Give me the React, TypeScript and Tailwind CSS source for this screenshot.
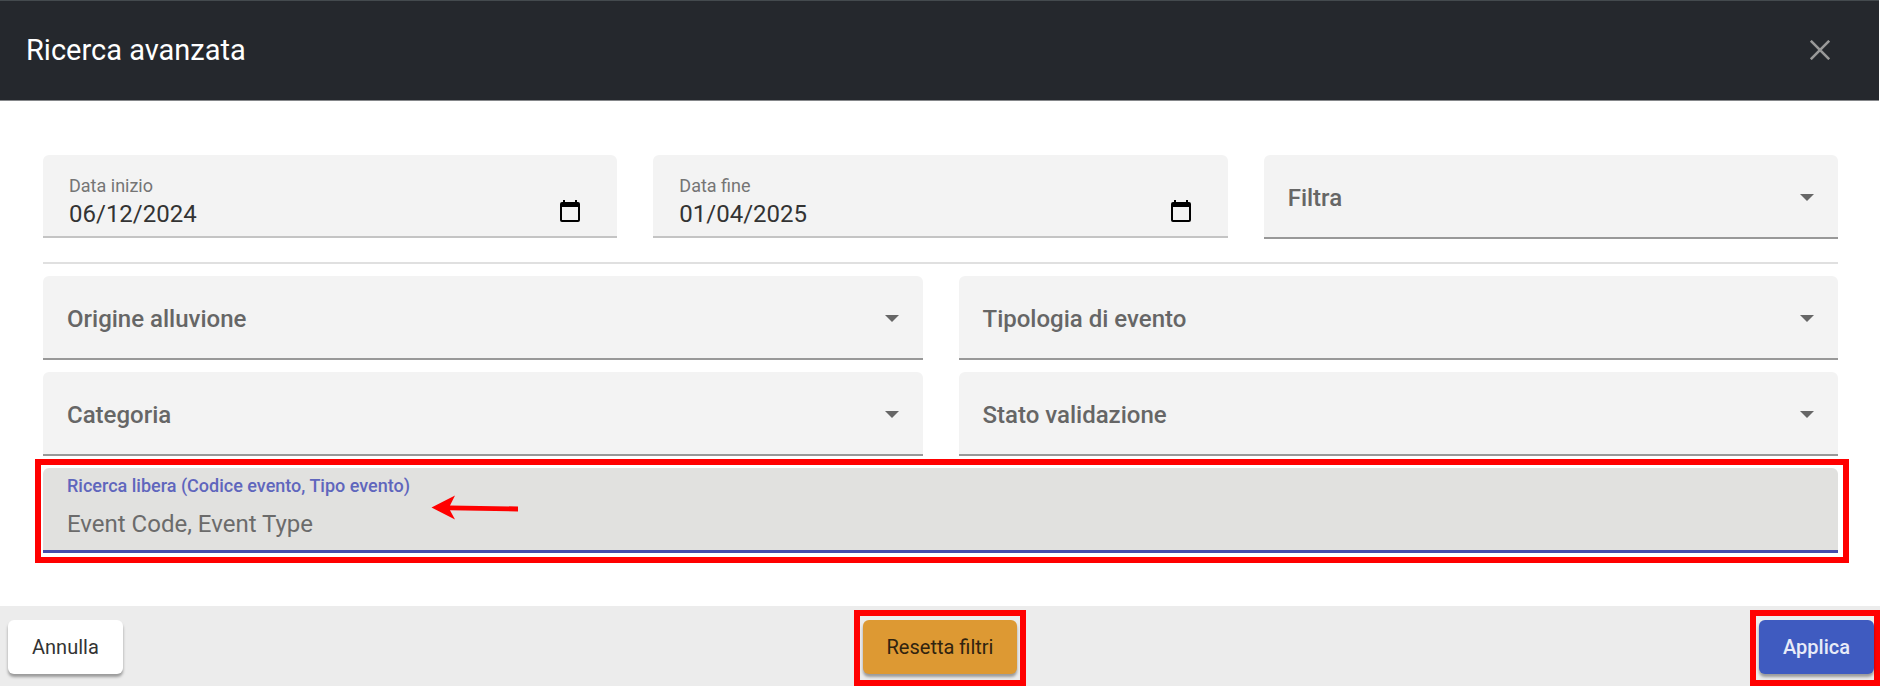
import { useState } from "react";
import type { ReactNode } from "react";

function SelectField({ id, label }: { id: string; label: string }) {
  return (
    <div className="grid h-21 items-center rounded-t-md border-b-2 border-[#989898] bg-[#f3f3f3]">
      <label
        htmlFor={id}
        className="pointer-events-none z-10 col-start-1 row-start-1 pt-1 pl-6 text-[24px] leading-8 font-medium text-[#666666]"
      >
        {label}
      </label>
      <svg
        viewBox="0 0 14 7"
        className="pointer-events-none z-10 col-start-1 row-start-1 mt-0.5 mr-6 h-[7px] w-3.5 justify-self-end fill-[#666666]"
        aria-hidden="true"
      >
        <path d="M0 0h14L7 7z" />
      </svg>
      <select
        id={id}
        className="col-start-1 row-start-1 h-full w-full appearance-none bg-transparent px-6 text-[24px] outline-none"
      >
        <option value=""></option>
      </select>
    </div>
  );
}

function DateField({ id, label, initial }: { id: string; label: string; initial: string }) {
  const [value, setValue] = useState(initial);
  return (
    <div className="flex h-[83px] items-end justify-between rounded-t-md border-b-2 border-[#c4c4c4] bg-[#f3f3f3] pr-[37px] pb-1.5 pl-[26px]">
      <div className="flex min-w-0 flex-1 flex-col">
        <label htmlFor={id} className="text-[18px] leading-6 text-[#757575]">
          {label}
        </label>
        <input
          id={id}
          type="text"
          inputMode="numeric"
          value={value}
          onChange={(e) => setValue(e.target.value)}
          className="w-full bg-transparent text-[24px] leading-8 text-[#333333] outline-none"
        />
      </div>
      <button type="button" aria-label={label} className="mb-2">
        <svg viewBox="0 0 20 22" className="h-[22px] w-5" aria-hidden="true">
          <path
            fillRule="evenodd"
            d="M3 0h2v2h10V0h2v2h1a2 2 0 0 1 2 2v16a2 2 0 0 1-2 2H2a2 2 0 0 1-2-2V4a2 2 0 0 1 2-2h1zM2 7v13h16V7z"
          />
        </svg>
      </button>
    </div>
  );
}

function Highlight({ className, children }: { className: string; children: ReactNode }) {
  return <div className={`border-6 border-[#ff0000] ${className}`}>{children}</div>;
}

const buttonBase =
  "block h-[54px] rounded-md px-6 text-[20px] leading-8 shadow-[0_3px_3px_rgba(0,0,0,0.35)]";

export default function App() {
  return (
    <main className="flex min-h-screen flex-col bg-white font-['Roboto',sans-serif]">
      <header className="mr-px flex h-[101px] items-center justify-between border-t border-b border-t-[#444a4e] border-b-[#85878a] bg-[#25282d] pr-[49px] pb-0.5 pl-[26px]">
        <h1 className="text-[29px] leading-10 text-white">Ricerca avanzata</h1>
        <button type="button" aria-label="Chiudi">
          <svg viewBox="0 0 20 20" className="size-5 stroke-[#999999]" strokeWidth="2.6" aria-hidden="true">
            <path d="M0.8 0.8 19.2 19.2M19.2 0.8 0.8 19.2" />
          </svg>
        </button>
      </header>

      <form className="flex-1 pt-[54px]">
        <div className="pr-[42px] pl-[43px]">
          <div className="grid grid-cols-3 gap-9">
            <DateField id="start" label="Data inizio" initial="06/12/2024" />
            <DateField id="end" label="Data fine" initial="01/04/2025" />
            <SelectField id="filter" label="Filtra" />
          </div>
          <hr className="mt-[23px] border-t-2 border-[#e0e0e0]" />
          <div className="mt-3 grid grid-cols-2 gap-x-9 gap-y-3">
            <SelectField id="origin" label="Origine alluvione" />
            <SelectField id="type" label="Tipologia di evento" />
            <SelectField id="category" label="Categoria" />
            <SelectField id="status" label="Stato validazione" />
          </div>
        </div>

        <div className="mt-[3px] mr-[31px] ml-[35px]">
          <Highlight className="pt-[3px] pr-[5px] pb-1 pl-0.5">
            <div className="relative flex h-[85px] flex-col rounded-t-md border-b-3 border-[#454cab] bg-[#e1e1df] px-6 pt-1.5">
              <label htmlFor="search" className="text-[18px] leading-6 font-medium text-[#5f66bd]">
                Ricerca libera (Codice evento, Tipo evento)
              </label>
              <input
                id="search"
                type="text"
                placeholder="Event Code, Event Type"
                className="mt-2.5 w-full bg-transparent text-[24px] leading-8 outline-none placeholder:text-[#6b6b6b]"
              />
              <svg viewBox="0 0 88 30" className="absolute top-6 left-[388px] h-[30px] w-[88px]" aria-hidden="true">
                <path d="M0.500 15.500 24 3.500 19 13.500 87 14.500V19.500L19 18.300 24 27.500z" fill="#ff0000" />
              </svg>
            </div>
          </Highlight>
        </div>
      </form>

      <footer className="grid h-20 grid-cols-3 items-end bg-[#ececec]">
        <button type="button" className={`${buttonBase} mb-3 ml-2 justify-self-start bg-white text-[#333333]`}>
          Annulla
        </button>
        <Highlight className="justify-self-center px-[3px] pt-1 pb-1.5">
          <button type="button" className={`${buttonBase} bg-[#dd9933] text-[#30230f]`}>
            Resetta filtri
          </button>
        </Highlight>
        <Highlight className="justify-self-end pt-1 pb-1.5 pl-[3px]">
          <button type="button" className={`${buttonBase} bg-[#3f5bc0] font-medium text-[#e8ebf8]`}>
            Applica
          </button>
        </Highlight>
      </footer>
    </main>
  );
}
